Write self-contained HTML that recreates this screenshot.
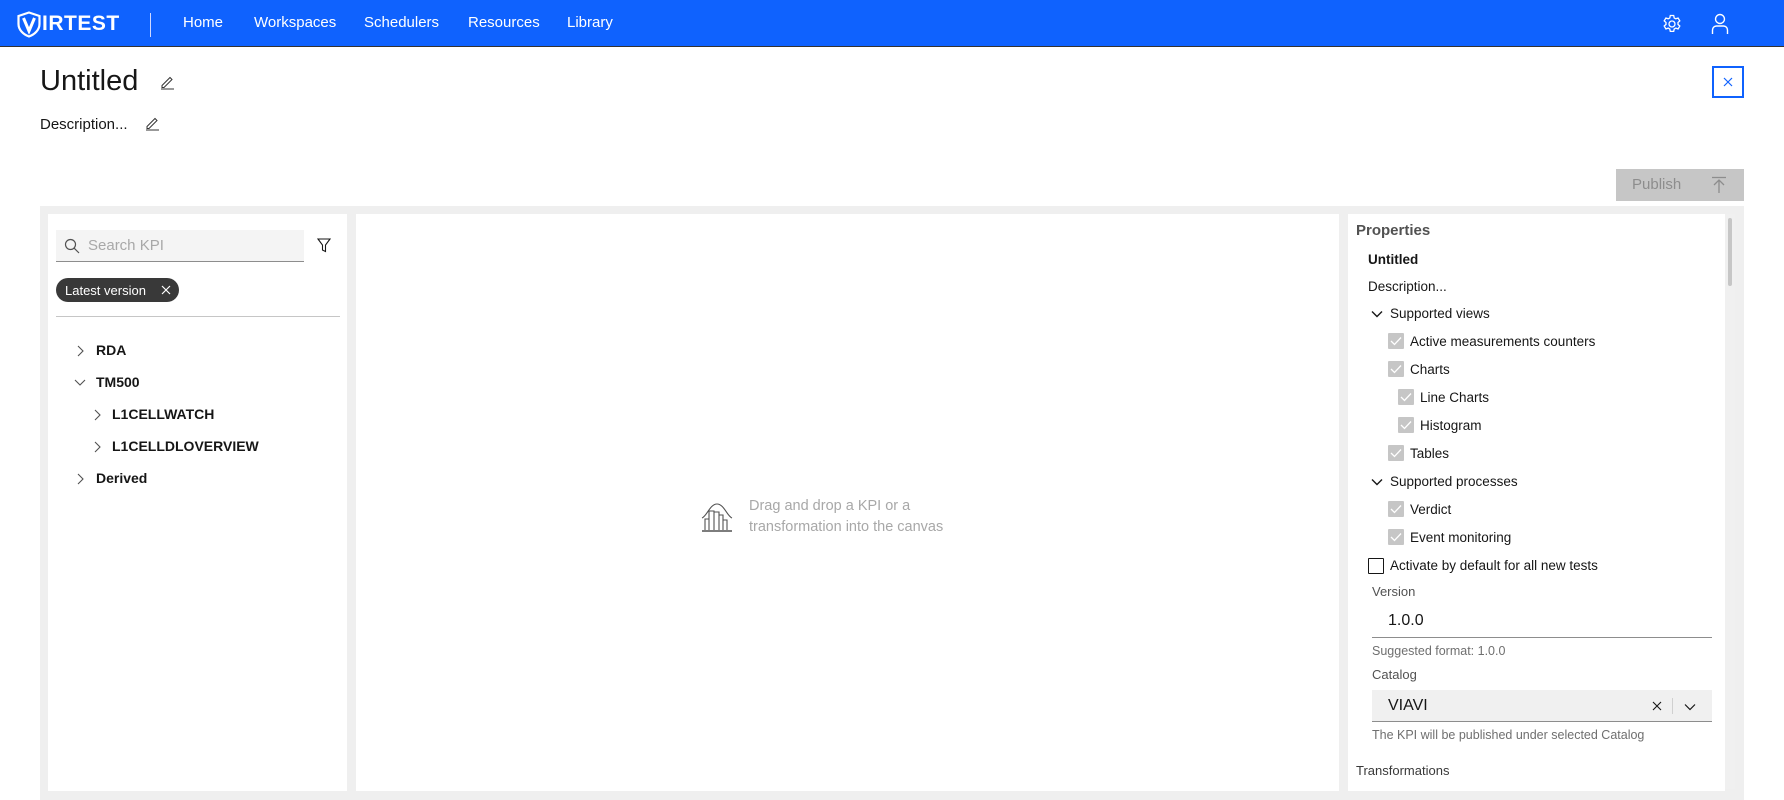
<!DOCTYPE html>
<html><head><meta charset="utf-8"><style>
*{box-sizing:border-box;margin:0;padding:0}
body{width:1784px;height:800px;overflow:hidden;background:#fff;font-family:"Liberation Sans",sans-serif;color:#161616;position:relative}
.a{position:absolute;white-space:nowrap}
.nav{position:absolute;left:0;top:0;width:1784px;height:47px;background:#0f62fe;border-bottom:1px solid #333}
.nav .i{position:absolute;top:14px;color:#fff;font-size:15px}
.t{position:absolute;font-size:14px;font-weight:bold;color:#161616;white-space:nowrap}
.r{position:absolute;font-size:13.5px;color:#161616;white-space:nowrap}
.cb{position:absolute;width:16px;height:16px;background:#c6c6c6;border-radius:1px}
.cb svg{position:absolute;left:2px;top:3px}
</style></head><body>
<div class="nav">
  <svg class="a" style="left:17px;top:11px" width="24" height="27" viewBox="0 0 24 27"><path d="M12 1.5 L22.5 5 V13 C22.5 19 17.5 23.5 12 25.5 C6.5 23.5 1.5 19 1.5 13 V5 Z" fill="none" stroke="#fff" stroke-width="2.2"/><path d="M6.5 7 L12 20 L17.5 7" fill="none" stroke="#fff" stroke-width="3"/></svg>
  <div class="a" style="left:42px;top:12px;color:#fff;font-weight:bold;font-size:21px;letter-spacing:0.5px">IRTEST</div>
  <div class="a" style="left:150px;top:13px;width:1px;height:24px;background:#cfd8ff"></div>
  <div class="i" style="left:183px">Home</div>
  <div class="i" style="left:254px">Workspaces</div>
  <div class="i" style="left:364px">Schedulers</div>
  <div class="i" style="left:468px">Resources</div>
  <div class="i" style="left:567px">Library</div>
  <svg class="a" style="left:1662px;top:14px" width="20" height="20" viewBox="0 0 20 20" fill="none" stroke="#fff" stroke-width="1.3"><path d="M8.3 1.5h3.4l.5 2.4 1.6.9 2.3-.8 1.7 2.9-1.8 1.6v1.9l1.8 1.6-1.7 2.9-2.3-.8-1.6.9-.5 2.4H8.3l-.5-2.4-1.6-.9-2.3.8-1.7-2.9 1.8-1.6V8.5L2.2 6.9l1.7-2.9 2.3.8 1.6-.9z"/><circle cx="10" cy="10" r="3"/></svg>
  <svg class="a" style="left:1711px;top:13px" width="18" height="22" viewBox="0 0 18 22" fill="none" stroke="#fff" stroke-width="1.4"><circle cx="9" cy="6" r="4.5"/><path d="M1.5 21v-4a4 4 0 0 1 4-4h7a4 4 0 0 1 4 4v4"/></svg>
</div>
<div class="a" style="left:40px;top:65px;font-size:29px;color:#161616">Untitled</div>
<svg class="a" style="left:159px;top:74px" width="16" height="16" viewBox="0 0 16 16" fill="none" stroke="#333" stroke-width="1"><path d="M3 11.5L11 3.5l2 2-8 8H3z"/><path d="M2 15h13"/></svg>
<div class="a" style="left:40px;top:116px;font-size:15px">Description...</div>
<svg class="a" style="left:144px;top:115px" width="16" height="16" viewBox="0 0 16 16" fill="none" stroke="#333" stroke-width="1"><path d="M3 11.5L11 3.5l2 2-8 8H3z"/><path d="M2 15h13"/></svg>
<div class="a" style="left:1712px;top:66px;width:32px;height:32px;border:2px solid #0f62fe"></div>
<svg class="a" style="left:1722px;top:76px" width="12" height="12" viewBox="0 0 12 12" stroke="#0f62fe" stroke-width="1.2"><path d="M2 2l8 8M10 2l-8 8"/></svg>
<div class="a" style="left:1616px;top:169px;width:128px;height:32px;background:#c6c6c6"></div>
<div class="a" style="left:1632px;top:176px;font-size:15px;color:#8d8d8d">Publish</div>
<svg class="a" style="left:1711px;top:176px" width="16" height="18" viewBox="0 0 16 18" fill="none" stroke="#8d8d8d" stroke-width="1.3"><path d="M1 1.5h14M8 17V4M3 9l5-5 5 5"/></svg>

<div class="a" style="left:40px;top:206px;width:1704px;height:594px;background:#efefef"></div>
<div class="a" style="left:48px;top:214px;width:299px;height:577px;background:#fff"></div>
<div class="a" style="left:356px;top:214px;width:983px;height:577px;background:#fff"></div>
<div class="a" style="left:1348px;top:214px;width:377px;height:577px;background:#fff"></div>
<div class="a" style="left:1725px;top:214px;width:10px;height:575px;background:#f0f0f0"></div>
<div class="a" style="left:1728px;top:218px;width:4px;height:68px;background:#c6c6c6;border-radius:2px"></div>

<div class="a" style="left:56px;top:230px;width:248px;height:32px;background:#f4f4f4;border-bottom:1px solid #8d8d8d"></div>
<svg class="a" style="left:64px;top:238px" width="16" height="16" viewBox="0 0 16 16" fill="none" stroke="#525252" stroke-width="1.2"><circle cx="6.5" cy="6.5" r="5"/><path d="M10.3 10.3L15 15"/></svg>
<div class="a" style="left:88px;top:237px;font-size:15px;color:#a8a8a8">Search KPI</div>
<svg class="a" style="left:317px;top:238px" width="14" height="15" viewBox="0 0 14 15" fill="none" stroke="#161616" stroke-width="1.1"><path d="M1 1h12L8.5 7v6.5l-3-1.5V7z"/></svg>
<div class="a" style="left:56px;top:278px;width:123px;height:24px;background:#393939;border-radius:12px"></div>
<div class="a" style="left:65px;top:283px;font-size:13px;color:#fff">Latest version</div>
<svg class="a" style="left:161px;top:285px" width="10" height="10" viewBox="0 0 10 10" stroke="#fff" stroke-width="1.2"><path d="M1 1l8 8M9 1l-8 8"/></svg>
<div class="a" style="left:56px;top:316px;width:284px;height:1px;background:#c6c6c6"></div>
<svg class="a" style="left:76px;top:345px" width="8" height="12" viewBox="0 0 8 12" fill="none" stroke="#525252" stroke-width="1.1"><path d="M2 1l5 5-5 5"/></svg>
<div class="t" style="left:96px;top:342px">RDA</div>
<svg class="a" style="left:74px;top:378px" width="12" height="8" viewBox="0 0 12 8" fill="none" stroke="#525252" stroke-width="1.1"><path d="M1 2l5 5 5-5"/></svg>
<div class="t" style="left:96px;top:374px">TM500</div>
<svg class="a" style="left:93px;top:409px" width="8" height="12" viewBox="0 0 8 12" fill="none" stroke="#525252" stroke-width="1.1"><path d="M2 1l5 5-5 5"/></svg>
<div class="t" style="left:112px;top:406px">L1CELLWATCH</div>
<svg class="a" style="left:93px;top:441px" width="8" height="12" viewBox="0 0 8 12" fill="none" stroke="#525252" stroke-width="1.1"><path d="M2 1l5 5-5 5"/></svg>
<div class="t" style="left:112px;top:438px">L1CELLDLOVERVIEW</div>
<svg class="a" style="left:76px;top:473px" width="8" height="12" viewBox="0 0 8 12" fill="none" stroke="#525252" stroke-width="1.1"><path d="M2 1l5 5-5 5"/></svg>
<div class="t" style="left:96px;top:470px">Derived</div>

<svg class="a" style="left:701px;top:502px" width="32" height="30" viewBox="0 0 32 30" fill="none" stroke="#525252" stroke-width="1.1"><path d="M1 16C6 14 9 2 16 2s10 12 15 14"/><path d="M4 28V17h4v11M8 28V9h5v19M13 28V10h5v18M18 28V13h4v15M22 28V18h4v10"/><path d="M1 29h30" stroke-width="1.5"/></svg>
<div class="a" style="left:749px;top:496px;font-size:14.5px;color:#a8a8a8;line-height:21px">Drag and drop a KPI or a<br>transformation into the canvas</div>

<div class="a" style="left:1356px;top:222px;font-size:15px;font-weight:bold;color:#525252">Properties</div>
<div class="r" style="left:1368px;top:252px;font-weight:bold">Untitled</div>
<div class="r" style="left:1368px;top:279px">Description...</div>
<svg class="a" style="left:1371px;top:310px" width="12" height="8" viewBox="0 0 12 8" fill="none" stroke="#161616" stroke-width="1.4"><path d="M1 1.5l5 5 5-5"/></svg>
<div class="r" style="left:1390px;top:306px">Supported views</div>
<div class="cb" style="left:1388px;top:333px"><svg width="12" height="10" viewBox="0 0 12 10" fill="none" stroke="#fff" stroke-width="1.3"><path d="M1 5l3.5 3.5L11 1.5"/></svg></div>
<div class="r" style="left:1410px;top:334px">Active measurements counters</div>
<div class="cb" style="left:1388px;top:361px"><svg width="12" height="10" viewBox="0 0 12 10" fill="none" stroke="#fff" stroke-width="1.3"><path d="M1 5l3.5 3.5L11 1.5"/></svg></div>
<div class="r" style="left:1410px;top:362px">Charts</div>
<div class="cb" style="left:1398px;top:389px"><svg width="12" height="10" viewBox="0 0 12 10" fill="none" stroke="#fff" stroke-width="1.3"><path d="M1 5l3.5 3.5L11 1.5"/></svg></div>
<div class="r" style="left:1420px;top:390px">Line Charts</div>
<div class="cb" style="left:1398px;top:417px"><svg width="12" height="10" viewBox="0 0 12 10" fill="none" stroke="#fff" stroke-width="1.3"><path d="M1 5l3.5 3.5L11 1.5"/></svg></div>
<div class="r" style="left:1420px;top:418px">Histogram</div>
<div class="cb" style="left:1388px;top:445px"><svg width="12" height="10" viewBox="0 0 12 10" fill="none" stroke="#fff" stroke-width="1.3"><path d="M1 5l3.5 3.5L11 1.5"/></svg></div>
<div class="r" style="left:1410px;top:446px">Tables</div>
<svg class="a" style="left:1371px;top:478px" width="12" height="8" viewBox="0 0 12 8" fill="none" stroke="#161616" stroke-width="1.4"><path d="M1 1.5l5 5 5-5"/></svg>
<div class="r" style="left:1390px;top:474px">Supported processes</div>
<div class="cb" style="left:1388px;top:501px"><svg width="12" height="10" viewBox="0 0 12 10" fill="none" stroke="#fff" stroke-width="1.3"><path d="M1 5l3.5 3.5L11 1.5"/></svg></div>
<div class="r" style="left:1410px;top:502px">Verdict</div>
<div class="cb" style="left:1388px;top:529px"><svg width="12" height="10" viewBox="0 0 12 10" fill="none" stroke="#fff" stroke-width="1.3"><path d="M1 5l3.5 3.5L11 1.5"/></svg></div>
<div class="r" style="left:1410px;top:530px">Event monitoring</div>
<div class="a" style="left:1368px;top:558px;width:16px;height:16px;border:1.5px solid #161616;border-radius:1px"></div>
<div class="r" style="left:1390px;top:558px">Activate by default for all new tests</div>
<div class="a" style="left:1372px;top:584px;font-size:13px;color:#525252">Version</div>
<div class="a" style="left:1388px;top:612px;font-size:16px;color:#161616">1.0.0</div>
<div class="a" style="left:1372px;top:637px;width:340px;height:1px;background:#8d8d8d"></div>
<div class="a" style="left:1372px;top:644px;font-size:12.5px;color:#6f6f6f">Suggested format: 1.0.0</div>
<div class="a" style="left:1372px;top:667px;font-size:13px;color:#525252">Catalog</div>
<div class="a" style="left:1372px;top:690px;width:340px;height:32px;background:#f0f0f0;border-bottom:1px solid #8d8d8d"></div>
<div class="a" style="left:1388px;top:697px;font-size:16px;color:#161616">VIAVI</div>
<svg class="a" style="left:1652px;top:701px" width="10" height="10" viewBox="0 0 10 10" stroke="#161616" stroke-width="1.1"><path d="M1 1l8 8M9 1l-8 8"/></svg>
<div class="a" style="left:1672px;top:698px;width:1px;height:16px;background:#d0d0d0"></div>
<svg class="a" style="left:1684px;top:703px" width="12" height="8" viewBox="0 0 12 8" fill="none" stroke="#161616" stroke-width="1.2"><path d="M1 1.5l5 5 5-5"/></svg>
<div class="a" style="left:1372px;top:728px;font-size:12.5px;color:#6f6f6f">The KPI will be published under selected Catalog</div>
<div class="a" style="left:1356px;top:763px;font-size:13px;color:#393939">Transformations</div>
</body></html>
